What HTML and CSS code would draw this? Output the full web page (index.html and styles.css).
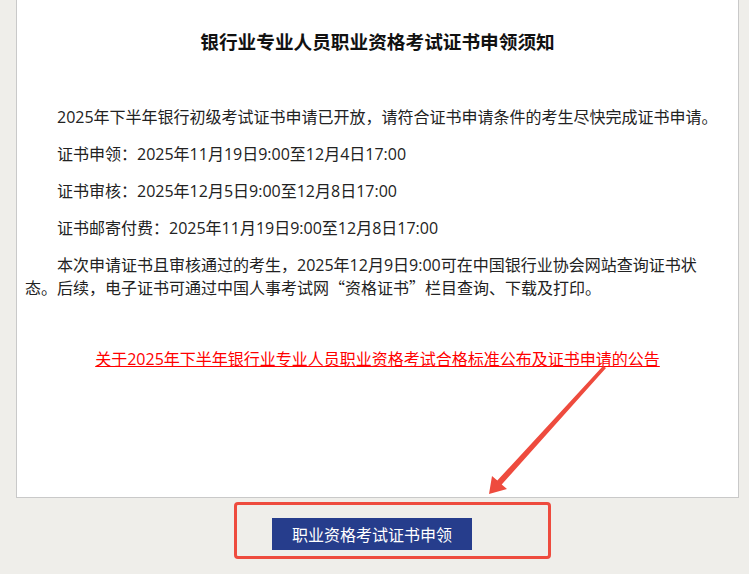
FILE: index.html
```html
<!DOCTYPE html>
<html lang="zh-CN">
<head>
  <meta charset="UTF-8" />
  <meta name="viewport" content="width=device-width, initial-scale=1.0"/>
  <title>证书申领须知</title>
  <link rel="stylesheet" href="styles.css">
</head>
<body>

  <div class="panel">
    <h1>银行业专业人员职业资格考试证书申领须知</h1>

    <p>2025年下半年银行初级考试证书申请已开放，请符合证书申请条件的考生尽快完成证书申请。</p>
    <p>证书申领：2025年11月19日9:00至12月4日17:00</p>
    <p>证书审核：2025年12月5日9:00至12月8日17:00</p>
    <p>证书邮寄付费：2025年11月19日9:00至12月8日17:00</p>
    <p>本次申请证书且审核通过的考生，2025年12月9日9:00可在中国银行业协会网站查询证书状态。后续，电子证书可通过中国人事考试网<span class="cjk">“</span>资格证书<span class="cjk">”</span>栏目查询、下载及打印。</p>

    <div class="notice-link">
      <a href="#">关于2025年下半年银行业专业人员职业资格考试合格标准公布及证书申请的公告</a>
    </div>
  </div>

  <div class="actions">
    <div class="highlight">
      <button class="apply-btn">职业资格考试证书申领</button>
    </div>
  </div>

  <!-- annotation arrow -->
  <svg class="arrow" width="749" height="574" viewBox="0 0 749 574">
    <polygon points="603,366 606,368 501.7,484.5 507,489 489,494 492,476 497.3,480.5" fill="#ee4b3e"/>
  </svg>

</body>
</html>
```

FILE: styles.css
```css
* {
  box-sizing: border-box;
}

body {
  margin: 0;
  font-family: "Open Sans", "Noto Sans CJK SC", sans-serif;
  background: #efeeea;
  color: #222;
}

.panel {
  margin: 0 10px 0 16px;
  height: 498px;
  padding: 28px 18px 0 8px;
  background: white;
  border: 1px solid #c9c9c9;
  border-top: none;
}

h1 {
  margin: 0 0 53px 10px;
  font-size: 14pt;
  line-height: 25px;
  font-weight: bold;
  text-align: center;
  color: #111;
  font-family: "Noto Sans CJK SC", sans-serif;
}

p {
  margin: 0 0 14px;
  font-size: 16px;
  line-height: 23px;
  text-indent: 2em;
}

.cjk {
  font-family: "Noto Sans CJK SC", sans-serif;
  line-height: 1;
}

.notice-link {
  margin: 48px 0 0 10px;
  text-align: center;
  font-size: 16px;
  line-height: 23px;
}

.notice-link a {
  color: #ff0000;
  text-decoration: underline;
}

.actions {
  padding: 4px 0 0 234px;
}

.highlight {
  display: inline-block;
  border: 3px solid #ee4b3e;
  border-radius: 4px;
  padding: 13px 76px 6px 35px;
}

.apply-btn {
  display: block;
  width: 200px;
  height: 32px;
  padding: 0;
  border: none;
  background: #263d8c;
  color: white;
  font-family: "Noto Sans CJK SC", sans-serif;
  font-size: 16px;
  line-height: 32px;
  cursor: pointer;
}

.arrow {
  position: absolute;
  left: 0;
  top: 0;
  pointer-events: none;
}
```
